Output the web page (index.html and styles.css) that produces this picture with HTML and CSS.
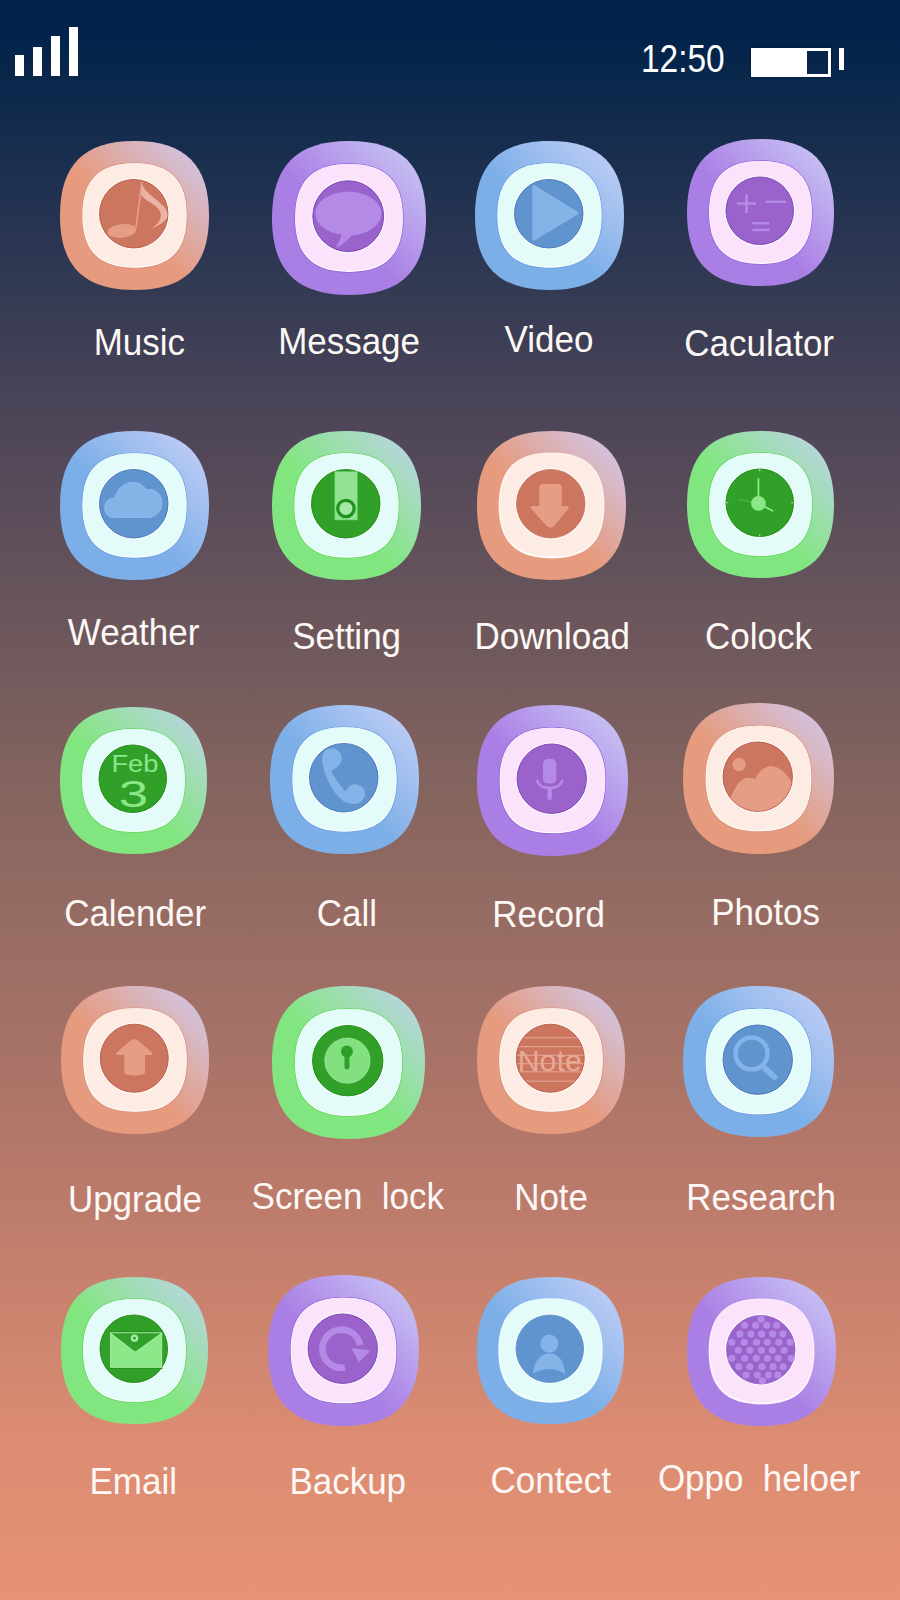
FILE: index.html
```html
<!DOCTYPE html>
<html lang="en">
<head>
    <meta charset="UTF-8">
    <meta name="viewport" content="width=device-width, initial-scale=1.0">
    <title>Home Screen</title>
    <link rel="stylesheet" href="styles.css">
</head>
<body>
    <!-- shared shapes for the app icons -->
    <svg class="defs" width="0" height="0">
        <defs>
            <linearGradient id="g-orange" x1="1" y1="0" x2="0.45" y2="0.55">
                <stop offset="0.08" stop-color="#cfc8ea"/>
                <stop offset="1" stop-color="#e69a7e"/>
            </linearGradient>
            <linearGradient id="g-purple" x1="1" y1="0" x2="0.45" y2="0.55">
                <stop offset="0.08" stop-color="#cac8f5"/>
                <stop offset="1" stop-color="#aa7fe5"/>
            </linearGradient>
            <linearGradient id="g-blue" x1="1" y1="0" x2="0.45" y2="0.55">
                <stop offset="0.08" stop-color="#c4cff6"/>
                <stop offset="1" stop-color="#7cafe8"/>
            </linearGradient>
            <linearGradient id="g-green" x1="1" y1="0" x2="0.45" y2="0.55">
                <stop offset="0.08" stop-color="#bdd4e6"/>
                <stop offset="1" stop-color="#82e680"/>
            </linearGradient>
            <path id="shell" d="M50 0C84 0 100 16 100 50C100 84 84 100 50 100C16 100 0 84 0 50C0 16 16 0 50 0Z"/>
            <g id="plate">
                <use href="#shell" class="plate-edge" transform="translate(14.5 14.5) scale(.71)"/>
                <use href="#shell" class="plate-glow" transform="translate(15 15) scale(.7)"/>
                <use href="#shell" class="plate-fill" transform="translate(15.4 15) scale(.693)"/>
                <circle class="disc-halo" cx="49.5" cy="48.8" r="23.9"/>
                <circle class="disc" cx="49.5" cy="48.8" r="23"/>
            </g>
            <clipPath id="disc-clip"><circle cx="49.5" cy="48.8" r="22.7"/></clipPath>
        </defs>
    </svg>

    <div class="screen">
        <div class="status-bar">
            <div class="signal">
                <span class="bar bar-1"></span>
                <span class="bar bar-2"></span>
                <span class="bar bar-3"></span>
                <span class="bar bar-4"></span>
            </div>
            <div class="status-right">
                <span class="time">12:50</span>
                <div class="battery"><span class="battery-level"></span></div>
                <span class="battery-tip"></span>
            </div>
        </div>

        <div class="apps">
            <div class="app app-music">
                <svg class="icon orange" viewBox="0 0 100 100">
                    <use href="#shell" fill="url(#g-orange)"/><use href="#plate"/>
                    <ellipse class="glyph" cx="41.5" cy="60.4" rx="9.6" ry="4.6" transform="rotate(-6 41.5 60.4)"/>
                    <path class="glyph" d="M54.4 27.5L55.4 27.7L51.6 58.5L50.4 58.5Z"/>
                    <path class="glyph-soft" d="M54.9 28.4C55.5 31 57 33 60 35.5C64 38.8 68 42 70.6 45.2C72.5 48 72.6 50.5 71.5 52C69.5 54.8 65 57.2 61.7 58.6C64.5 56.5 67.3 54 67.6 50.5C67.9 47 65.5 44.5 62.5 42.5C59 40 55.8 38.5 54.3 35.5Z"/>
                </svg>
                <div class="label">Music</div>
            </div>
            <div class="app app-message">
                <svg class="icon purple" viewBox="0 0 100 100">
                    <use href="#shell" fill="url(#g-purple)"/><use href="#plate"/>
                    <path class="glyph" d="M49.6 33C61.4 33 71 39.3 71 47C71 54.7 61.4 61 52 61.2C48 65 45 68.5 41.5 69C43.5 66 45 63.5 45 60.6C35.5 59.5 28.2 53.8 28.2 47C28.2 39.3 37.8 33 49.6 33Z"/>
                </svg>
                <div class="label">Message</div>
            </div>
            <div class="app app-video">
                <svg class="icon blue" viewBox="0 0 100 100">
                    <use href="#shell" fill="url(#g-blue)"/><use href="#plate"/>
                    <path class="glyph glyph-round" d="M39.5 30.5L68.5 48.5L39.5 66Z"/>
                </svg>
                <div class="label">Video</div>
            </div>
            <div class="app app-caculator">
                <svg class="icon purple" viewBox="0 0 100 100">
                    <use href="#shell" fill="url(#g-purple)"/><use href="#plate"/>
                    <path class="glyph-line" d="M34.1 43.9H46.9M40.5 37.5V50.3M53.6 42.7H67.3M44.5 57.3H56M44.5 61.9H56"/>
                </svg>
                <div class="label">Caculator</div>
            </div>

            <div class="app app-weather">
                <svg class="icon blue" viewBox="0 0 100 100">
                    <use href="#shell" fill="url(#g-blue)"/><use href="#plate"/>
                    <path class="glyph cloud" d="M36 58C31.5 58 30 54.5 30 51.5C30 47 34 44.5 37 45C38 39 43 34.5 49 34.5C53 34.5 56 36.5 58 39.5C63 38 68.5 42 68.5 48.5C68.5 54 64 58 59 58Z"/>
                </svg>
                <div class="label">Weather</div>
            </div>
            <div class="app app-setting">
                <svg class="icon green" viewBox="0 0 100 100">
                    <use href="#shell" fill="url(#g-green)"/><use href="#plate"/>
                    <rect class="slot" x="42.2" y="27.3" width="15" height="32.4"/>
                    <circle class="knob" cx="49.6" cy="52" r="5.5"/>
                </svg>
                <div class="label">Setting</div>
            </div>
            <div class="app app-download">
                <svg class="icon orange flat" viewBox="0 0 100 100">
                    <use href="#shell" fill="url(#g-orange)"/><use href="#plate"/>
                    <path class="glyph" d="M41.8 38Q41.8 35.6 44 35.6H54.7Q56.9 35.6 56.9 38V50.3H60Q62.5 50.3 61 52.5L52 63.5Q49.3 66 46.5 63.5L36.7 52.5Q35 50.3 37.5 50.3H41.8Z"/>
                </svg>
                <div class="label">Download</div>
            </div>
            <div class="app app-colock">
                <svg class="icon green" viewBox="0 0 100 100">
                    <use href="#shell" fill="url(#g-green)"/><use href="#plate"/>
                    <path class="clock-tick" d="M49.5 25.8V27.4M49.5 70.2V71.8M26.5 48.8H28.1M70.9 48.8H72.5"/>
                    <path class="clock-hand" d="M48.6 32.3V49.3M48.6 49.3L58.6 54.5"/>
                    <path class="clock-dim" d="M48.6 49.3L35 46.6"/>
                    <circle class="clock-hub" cx="48.6" cy="49.3" r="5"/>
                </svg>
                <div class="label">Colock</div>
            </div>

            <div class="app app-calender">
                <svg class="icon green" viewBox="0 0 100 100">
                    <use href="#shell" fill="url(#g-green)"/><use href="#plate"/>
                    <text class="icon-text" x="35" y="44.5" font-size="16.5" textLength="32" lengthAdjust="spacingAndGlyphs">Feb</text>
                    <text class="icon-text" x="40" y="68" font-size="24.5" textLength="20" lengthAdjust="spacingAndGlyphs">3</text>
                </svg>
                <div class="label">Calender</div>
            </div>
            <div class="app app-call">
                <svg class="icon blue" viewBox="0 0 100 100">
                    <use href="#shell" fill="url(#g-blue)"/><use href="#plate"/>
                    <path class="glyph" d="M35.1 35.8C35.1 31.8 38 29.1 41.4 29.1C45.5 29.1 48.1 32.5 48.1 36C48.1 39.5 44.5 42.5 40.9 44.3C43.5 49 47 54 50.8 58.2C52 55 54.5 53.2 57 53.2C60.8 53.2 63.8 56 63.8 59.3C63.8 63.5 60.5 66.4 57 66.4C52 66.4 48.5 64.5 45 60.5C39.5 54 35.1 44 35.1 35.8Z"/>
                </svg>
                <div class="label">Call</div>
            </div>
            <div class="app app-record">
                <svg class="icon purple" viewBox="0 0 100 100">
                    <use href="#shell" fill="url(#g-purple)"/><use href="#plate"/>
                    <rect class="glyph" x="43.7" y="35.8" width="8.8" height="16.2" rx="3"/>
                    <path class="mic-line" d="M40 50.3C41.5 56.5 54.5 56.5 56.5 50.3"/>
                    <path class="mic-stem" d="M48.1 55.5V61.5"/>
                </svg>
                <div class="label">Record</div>
            </div>
            <div class="app app-photos">
                <svg class="icon orange" viewBox="0 0 100 100">
                    <use href="#shell" fill="url(#g-orange)"/><use href="#plate"/>
                    <circle class="glyph" cx="37.2" cy="40.7" r="4.4"/>
                    <path class="glyph-hill" clip-path="url(#disc-clip)" d="M30 66C34 56 38 49.5 43 49.5C45.5 49.5 46.5 50 47.8 50.5C50 45.5 54 41.8 58.5 41.8C64 41.8 69 47.5 72.5 53.5L75 75H28Z"/>
                </svg>
                <div class="label">Photos</div>
            </div>

            <div class="app app-upgrade">
                <svg class="icon orange" viewBox="0 0 100 100">
                    <use href="#shell" fill="url(#g-orange)"/><use href="#plate"/>
                    <path class="glyph" d="M47 36.8Q49.5 35 52 36.8L61.5 45Q62.8 46.6 60.5 46.6H56.8V58Q56.8 60 54 60Q49.5 60.8 45 60Q42.8 60 42.8 58V46.6H38.5Q36.2 46.6 37.5 45Z"/>
                </svg>
                <div class="label">Upgrade</div>
            </div>
            <div class="app app-lock">
                <svg class="icon green" viewBox="0 0 100 100">
                    <use href="#shell" fill="url(#g-green)"/><use href="#plate"/>
                    <circle class="lock-face" cx="49.3" cy="48.8" r="14.8"/>
                    <circle class="lock-hole" cx="49" cy="42.8" r="3.9"/>
                    <path class="lock-stem" d="M49 44V53"/>
                </svg>
                <div class="label">Screen&nbsp; lock</div>
            </div>
            <div class="app app-note">
                <svg class="icon orange" viewBox="0 0 100 100">
                    <use href="#shell" fill="url(#g-orange)"/><use href="#plate"/>
                    <path class="note-lines" clip-path="url(#disc-clip)" d="M26 35H73M26 41H73M26 46.8H73M26 52.5H73M26 58H73M26 64.3H73"/>
                    <text class="note-text" x="27.5" y="57.7" font-size="20.5">Note</text>
                </svg>
                <div class="label">Note</div>
            </div>
            <div class="app app-research">
                <svg class="icon blue" viewBox="0 0 100 100">
                    <use href="#shell" fill="url(#g-blue)"/><use href="#plate"/>
                    <circle class="lens" cx="45.4" cy="44.7" r="10.6"/>
                    <path class="lens-handle" d="M53.5 53.8L60.4 60.2"/>
                </svg>
                <div class="label">Research</div>
            </div>

            <div class="app app-email">
                <svg class="icon green" viewBox="0 0 100 100">
                    <use href="#shell" fill="url(#g-green)"/><use href="#plate"/>
                    <path class="mail-rim" d="M33 37.2H69.2M33 62.2H69.2"/>
                    <rect class="mail" x="33.6" y="38" width="35" height="23.5"/>
                    <path class="mail-flap" d="M33.6 38H68.6L51.5 50.4Q50.5 51.3 49.5 50.4Z"/>
                    <circle class="mail-btn" cx="50" cy="41.6" r="2.5"/>
                    <circle class="mail-dot" cx="50" cy="41.6" r=".9"/>
                </svg>
                <div class="label">Email</div>
            </div>
            <div class="app app-backup">
                <svg class="icon purple" viewBox="0 0 100 100">
                    <use href="#shell" fill="url(#g-purple)"/><use href="#plate"/>
                    <path class="backup-arc" d="M51 61.2A12.6 12.6 0 1 1 61 46.5"/>
                    <path class="glyph" d="M55.3 48.4L67.8 50L60.2 58Z"/>
                </svg>
                <div class="label">Backup</div>
            </div>
            <div class="app app-contect">
                <svg class="icon blue flat" viewBox="0 0 100 100">
                    <use href="#shell" fill="url(#g-blue)"/><use href="#plate"/>
                    <circle class="glyph" cx="49.2" cy="45.3" r="6.2"/>
                    <path class="glyph" d="M38 65.8C39 57 43 52 49.2 52C55.5 52 59.5 57 60 65.8C53 61.5 45 61.5 38 65.8Z"/>
                </svg>
                <div class="label">Contect</div>
            </div>
            <div class="app app-oppo">
                <svg class="icon purple flat" viewBox="0 0 100 100">
                    <use href="#shell" fill="url(#g-purple)"/><use href="#plate"/>
                    <g class="glyph dots">
                        <circle cx="49.7" cy="28.4"/>
                        <circle cx="38.7" cy="32.4"/><circle cx="46.1" cy="32.4"/><circle cx="53.5" cy="32.4"/><circle cx="60.2" cy="32.4"/>
                        <circle cx="35.5" cy="38.3"/><circle cx="42.9" cy="38.3"/><circle cx="50.1" cy="38.3"/><circle cx="57.5" cy="38.3"/><circle cx="64.3" cy="38.3"/>
                        <circle cx="30.1" cy="43.8"/><circle cx="38.4" cy="43.8"/><circle cx="46.7" cy="43.8"/><circle cx="53.9" cy="43.8"/><circle cx="61.6" cy="43.8"/><circle cx="69.2" cy="43.8"/>
                        <circle cx="34.4" cy="49.2"/><circle cx="42.2" cy="49.2"/><circle cx="49.9" cy="49.2"/><circle cx="57.3" cy="49.2"/><circle cx="65.2" cy="49.2"/>
                        <circle cx="30.1" cy="54.6"/><circle cx="38.7" cy="54.6"/><circle cx="46.5" cy="54.6"/><circle cx="53.9" cy="54.6"/><circle cx="61.1" cy="54.6"/><circle cx="69.9" cy="54.6"/>
                        <circle cx="34.8" cy="60.2"/><circle cx="42.2" cy="60.2"/><circle cx="50.3" cy="60.2"/><circle cx="57.8" cy="60.2"/><circle cx="64.5" cy="60.2"/>
                        <circle cx="39.6" cy="65.8"/><circle cx="47.2" cy="65.8"/><circle cx="54.6" cy="65.8"/><circle cx="60.9" cy="65.8"/>
                        <circle cx="50.6" cy="69.6"/>
                    </g>
                </svg>
                <div class="label">Oppo&nbsp; heloer</div>
            </div>
        </div>
    </div>
</body>
</html>
```

FILE: styles.css
```css
html, body {
    margin: 0;
    padding: 0;
}
body {
    font-family: "Liberation Sans", Arial, sans-serif;
    color: #fff;
}
.defs {
    display: block;
    height: 0;
}
.screen {
    width: 900px;
    height: 1600px;
    overflow: hidden;
    background: linear-gradient(180deg, #01234a 0%, #01234a 2%, #4c4558 26%, #86655f 50%, #b5786a 72%, #dc8c72 90%, #e69274 100%);
}

/* Status bar */
.status-bar {
    height: 139px;
    box-sizing: border-box;
    padding: 27px 56px 0 15px;
    display: flex;
    justify-content: space-between;
    align-items: flex-start;
}
.signal {
    display: flex;
    align-items: flex-end;
    gap: 9px;
    height: 49px;
}
.bar {
    width: 9px;
    background-color: #fff;
}
.bar-1 { height: 21px; }
.bar-2 { height: 29px; }
.bar-3 { height: 40px; }
.bar-4 { height: 49px; }
.status-right {
    display: flex;
    align-items: flex-start;
    padding-top: 21px;
}
.time {
    width: 110px;
    margin-top: -5px;
    font-size: 38px;
    line-height: 32px;
    transform: scaleX(0.88);
    transform-origin: left center;
}
.battery {
    width: 80px;
    height: 29px;
    box-sizing: border-box;
    border: 3px solid #fff;
    outline: 1px solid rgba(0, 20, 60, 0.5);
}
.battery-level {
    display: block;
    width: 53px;
    height: 100%;
    background-color: #fff;
}
.battery-tip {
    width: 5px;
    height: 22px;
    margin: 0 0 0 8px;
    background-color: #fff;
}

/* App grid */
.apps {
    display: grid;
    grid-template-columns: 210px 214px 192px 228px;
    grid-template-rows: 292px 272px 283px 289px 200px;
    padding-left: 30px;
}
.app {
    display: flex;
    flex-direction: column;
    align-items: center;
}
.icon {
    display: block;
    flex: none;
    width: var(--size);
    height: var(--size);
    margin-top: var(--dy);
    margin-left: calc(var(--dx) * 2);
}
.label {
    margin-top: var(--ly);
    margin-left: calc(var(--lx) * 2);
    font-size: 37px;
    line-height: 40px;
    white-space: nowrap;
    color: #fdf8f5;
    transform: scaleX(0.945);
}

/* small offsets of each icon and label in its cell */
.app-music { --size: 149px; --dx: -0.5px; --dy: 2px; --lx: 4.3px; --ly: 33px; }
.app-message { --size: 154px; --dx: 2px; --dy: 2px; --lx: 2px; --ly: 27px; }
.app-video { --size: 149px; --dx: -0.5px; --dy: 2px; --lx: -1px; --ly: 30px; }
.app-caculator { --size: 147px; --dx: 0.5px; --dy: 0px; --lx: -1px; --ly: 38px; }
.app-weather { --size: 149px; --dx: -0.5px; --dy: 0px; --lx: -1px; --ly: 33px; }
.app-setting { --size: 149px; --dx: -0.5px; --dy: 0px; --lx: 0px; --ly: 37px; }
.app-download { --size: 149px; --dx: 1.5px; --dy: 0px; --lx: 2px; --ly: 37px; }
.app-colock { --size: 147px; --dx: 0.5px; --dy: 0px; --lx: -1px; --ly: 39px; }
.app-calender { --size: 147px; --dx: -1.5px; --dy: 4px; --lx: 0px; --ly: 40px; }
.app-call { --size: 149px; --dx: -2.5px; --dy: 2px; --lx: 0px; --ly: 40px; }
.app-record { --size: 151px; --dx: 2.5px; --dy: 2px; --lx: -1px; --ly: 39px; }
.app-photos { --size: 151px; --dx: -1.5px; --dy: 0px; --lx: 6px; --ly: 39px; }
.app-upgrade { --size: 148px; --dx: 0px; --dy: 0px; --lx: 0px; --ly: 46px; }
.app-lock { --size: 153px; --dx: 1.5px; --dy: 0px; --lx: 1px; --ly: 38px; }
.app-note { --size: 148px; --dx: 1px; --dy: 0px; --lx: 1px; --ly: 44px; }
.app-research { --size: 151px; --dx: -1.5px; --dy: 0px; --lx: 1px; --ly: 41px; }
.app-email { --size: 147px; --dx: -0.5px; --dy: 2px; --lx: -2px; --ly: 38px; }
.app-backup { --size: 151px; --dx: -3.5px; --dy: 0px; --lx: 1px; --ly: 36px; }
.app-contect { --size: 147px; --dx: 0.5px; --dy: 2px; --lx: 1px; --ly: 37px; }
.app-oppo { --size: 149px; --dx: 1.5px; --dy: 2px; --lx: -1px; --ly: 33px; }

/* Icon themes */
.orange { --edge: #dc8f76; --inner: #fdece3; --disc: #cc7660; --ring: #b9553f; --glyph: #e59d86; --soft: #e9b4a4; }
.purple { --edge: #8f64dc; --inner: #fbe4fb; --disc: #9a63cc; --ring: #7a3db5; --glyph: #b48ae6; --soft: #b48ae6; }
.blue { --edge: #6a9ee0; --inner: #e3fbf9; --disc: #6094cf; --ring: #3d74b8; --glyph: #84b3e8; --soft: #84b3e8; }
.green { --edge: #5ed85c; --inner: #e3fbf9; --disc: #30a028; --ring: #128a10; --glyph: #8ae888; --soft: #8ae888; }
.flat { --edge: var(--inner); --ring: var(--disc); }

.plate-edge { fill: var(--edge); }
.plate-glow { fill: #fff; }
.plate-fill { fill: var(--inner); }
.disc-halo { fill: #fff; }
.disc {
    fill: var(--disc);
    stroke: var(--ring);
    stroke-width: 0.6;
}
.glyph { fill: var(--glyph); }
.glyph-soft { fill: var(--soft); }
.glyph-hill { fill: #e59d86; }
.glyph-round {
    stroke: var(--glyph);
    stroke-width: 2;
    stroke-linejoin: round;
}
.glyph-line {
    fill: none;
    stroke: var(--glyph);
    stroke-width: 1.8;
}
.cloud {
    stroke: #97c0ee;
    stroke-width: 0.5;
}
.dots circle { r: 2.4px; }

/* Single icon details */
.slot {
    fill: #93e294;
    stroke: #6cd26c;
    stroke-width: 0.4;
}
.knob {
    fill: #a4e9a4;
    stroke: #1f941c;
    stroke-width: 2.2;
}
.clock-tick {
    fill: none;
    stroke: #a8eba6;
    stroke-width: 0.7;
}
.clock-hand {
    fill: none;
    stroke: #9cec9a;
    stroke-width: 1.1;
}
.clock-dim {
    fill: none;
    stroke: #62c45e;
    stroke-width: 0.5;
}
.clock-hub { fill: #8ae888; }
.icon-text {
    fill: #8ae888;
    font-family: "Liberation Sans", Arial, sans-serif;
}
.mic-line {
    fill: none;
    stroke: var(--glyph);
    stroke-width: 1.8;
    stroke-linecap: round;
}
.mic-stem {
    fill: none;
    stroke: var(--glyph);
    stroke-width: 3;
    stroke-linecap: round;
}
.lock-face {
    fill: #82e080;
    stroke: #b4eeb2;
    stroke-width: 0.4;
}
.lock-hole { fill: #2d9e27; }
.lock-stem {
    fill: none;
    stroke: #2d9e27;
    stroke-width: 3.2;
    stroke-linecap: round;
}
.note-lines {
    fill: none;
    stroke: #eab0a0;
    stroke-width: 0.6;
}
.note-text {
    fill: #e8a999;
    font-family: "Liberation Sans", Arial, sans-serif;
}
.lens {
    fill: none;
    stroke: var(--glyph);
    stroke-width: 3;
}
.lens-handle {
    fill: none;
    stroke: var(--glyph);
    stroke-width: 4;
    stroke-linecap: round;
}
.mail-rim {
    fill: none;
    stroke: #1f8f1a;
    stroke-width: 0.6;
}
.mail {
    fill: #8ce888;
    stroke: #c4f4c0;
    stroke-width: 0.4;
}
.mail-flap {
    fill: #30a028;
    stroke: #c4f4c0;
    stroke-width: 0.4;
}
.mail-btn { fill: #a8eeaa; }
.mail-dot { fill: #2d9e27; }
.backup-arc {
    fill: none;
    stroke: var(--glyph);
    stroke-width: 4.4;
}
```
